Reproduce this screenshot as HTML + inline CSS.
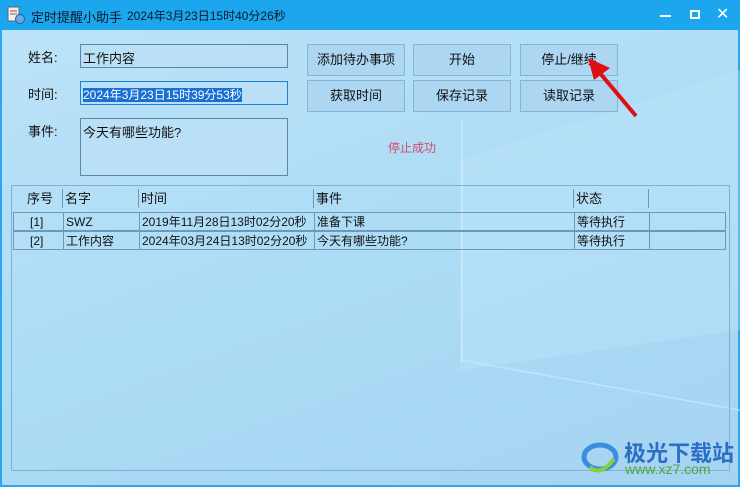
<!DOCTYPE html>
<html><head><meta charset="utf-8"><style>
*{margin:0;padding:0;box-sizing:border-box}
body{width:740px;height:487px;overflow:hidden;font-family:"Liberation Sans","Noto Sans CJK SC",sans-serif;font-size:13px;color:#111;position:relative;background:linear-gradient(160deg,#bde3f8 0%,#addcf6 50%,#a5d3f1 100%)}
.title{position:absolute;left:0;top:0;width:740px;height:30px;background:#1ba6ee;color:#0a1a2a}
.title .t{position:absolute;left:31px;top:7px;font-size:13px}
.title .t2{position:absolute;left:127px;top:7px;font-size:12px}
.frame{position:absolute;left:0;top:30px;width:740px;height:457px;border:2px solid #2aa8ee;border-top:none}
.lbl{position:absolute;font-size:13px}
.box{position:absolute;border:1px solid #5a87a8;background:#b9e0f7;font-size:13px;padding:3px 2px}
.btn{position:absolute;width:98px;height:32px;border:1px solid #86b6d6;background:#acd6f2;text-align:center;line-height:30px;font-size:13px}
.tbl{position:absolute;left:11px;top:185px;width:719px;height:286px;border:1px solid #7fb0cf}
.row{position:absolute;left:13px;height:19px;width:713px;font-size:12px}
.c{position:absolute;top:0;height:100%;border-left:1px solid #6d99b8;padding-left:2px;line-height:19px}
</style></head><body>
<div class="title">
<svg style="position:absolute;left:7px;top:6px" width="18" height="18"><rect x="1" y="1" width="11" height="14" fill="#eee" stroke="#667"/><line x1="3" y1="5" x2="10" y2="5" stroke="#b44"/><line x1="3" y1="8" x2="10" y2="8" stroke="#668"/><circle cx="13" cy="13" r="4.5" fill="#6aa8e0" stroke="#2a5a9a"/></svg>
<span class="t">定时提醒小助手</span><span class="t2">2024年3月23日15时40分26秒</span>
<div style="position:absolute;left:660px;top:15px;width:11px;height:2px;background:#fff"></div>
<div style="position:absolute;left:690px;top:10px;width:10px;height:9px;border:2px solid #fff"></div>
<div style="position:absolute;left:716px;top:4px;color:#fff;font-size:16px">✕</div>
</div>
<div class="frame"></div>
<svg style="position:absolute;left:0;top:30px" width="740" height="457"><polygon points="460,130 740,40 740,300 460,340" fill="#c4e8fb" opacity=".3"/><line x1="462" y1="90" x2="462" y2="330" stroke="#d6f3ff" stroke-width="1.5" opacity=".7"/><line x1="460" y1="330" x2="740" y2="380" stroke="#c8ecfb" stroke-width="1.5" opacity=".7"/></svg>
<div class="lbl" style="left:28px;top:47px">姓名:</div>
<div class="lbl" style="left:28px;top:84px">时间:</div>
<div class="lbl" style="left:28px;top:121px">事件:</div>
<div class="box" style="left:80px;top:44px;width:208px;height:24px">工作内容</div>
<div class="box" style="left:80px;top:81px;width:208px;height:24px;border-color:#1c7fd6;padding-top:4px"><span style="background:#1a6fd3;color:#fff;font-size:12px">2024年3月23日15时39分53秒</span></div>
<div class="box" style="left:80px;top:118px;width:208px;height:58px">今天有哪些功能?</div>
<div class="btn" style="left:307px;top:44px">添加待办事项</div>
<div class="btn" style="left:413px;top:44px">开始</div>
<div class="btn" style="left:520px;top:44px">停止/继续</div>
<div class="btn" style="left:307px;top:80px">获取时间</div>
<div class="btn" style="left:413px;top:80px">保存记录</div>
<div class="btn" style="left:520px;top:80px">读取记录</div>
<div class="lbl" style="left:388px;top:139px;color:#d24a6a;font-size:12px">停止成功</div>
<svg style="position:absolute;left:580px;top:50px" width="60" height="70"><line x1="56" y1="66" x2="14" y2="16" stroke="#e01010" stroke-width="4"/><polygon points="8,8 30,18 14,30" fill="#e01010"/></svg>
<div class="tbl"></div>
<div class="row" style="top:189px;font-size:13px"><div class="c" style="left:0;border:none;padding-left:14px">序号</div><div class="c" style="left:49px">名字</div><div class="c" style="left:125px">时间</div><div class="c" style="left:300px">事件</div><div class="c" style="left:560px">状态</div><div class="c" style="left:635px"></div></div>
<div class="row" style="top:212px;border:1px solid #6d99b8"><div class="c" style="left:0;border:none;padding-left:16px">[1]</div><div class="c" style="left:49px">SWZ</div><div class="c" style="left:125px">2019年11月28日13时02分20秒</div><div class="c" style="left:300px">准备下课</div><div class="c" style="left:560px">等待执行</div><div class="c" style="left:635px"></div></div>
<div class="row" style="top:231px;border:1px solid #6d99b8"><div class="c" style="left:0;border:none;padding-left:16px">[2]</div><div class="c" style="left:49px">工作内容</div><div class="c" style="left:125px">2024年03月24日13时02分20秒</div><div class="c" style="left:300px">今天有哪些功能?</div><div class="c" style="left:560px">等待执行</div><div class="c" style="left:635px"></div></div>
<svg style="position:absolute;left:580px;top:437px" width="40" height="40"><ellipse cx="20" cy="20" rx="16" ry="12" fill="none" stroke="#3a8ee0" stroke-width="5"/><path d="M10 30 Q20 40 34 22" stroke="#8ccf3a" stroke-width="4" fill="none"/></svg>
<div style="position:absolute;left:624px;top:436px;font-size:22px;font-weight:bold;color:#2a6fc4">极光下载站</div>
<div style="position:absolute;left:625px;top:461px;font-size:14px;color:#4caa3a">www.xz7.com</div>
</body></html>
